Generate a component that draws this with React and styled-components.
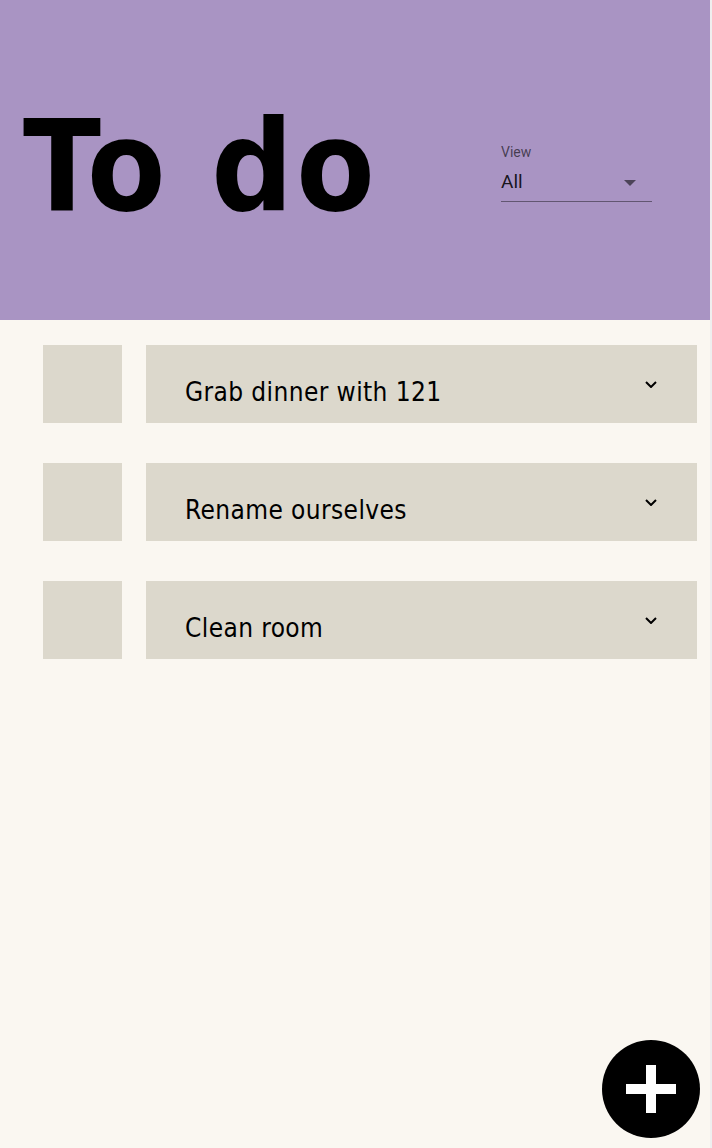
import React from 'react';
import styled, { createGlobalStyle } from 'styled-components';

const todos = ['Grab dinner with 121', 'Rename ourselves', 'Clean room'];

const GlobalStyle = createGlobalStyle`
  html, body {
    margin: 0;
    padding: 0;
    background: #faf7f1;
  }
  * {
    box-sizing: border-box;
  }
`;

const Page = styled.div`
  min-height: 100vh;
  background: #faf7f1;
  border-right: 2px solid #efefef;
`;

const Header = styled.header`
  display: flex;
  align-items: flex-start;
  height: 320px;
  padding: 103px 58px 0 23px;
  background: #a994c3;
`;

const Title = styled.h1`
  margin: 0;
  font-family: "DejaVu Sans Condensed", "DejaVu Sans", sans-serif;
  font-stretch: condensed;
  font-weight: 700;
  font-size: 127px;
  line-height: 1;
  letter-spacing: 3px;
  color: #000;
`;

const ViewSelect = styled.div`
  margin-left: auto;
  margin-top: 42px;
  width: 151px;
  font-family: Roboto, "Liberation Sans", sans-serif;
`;

const SelectLabel = styled.div`
  font-size: 14px;
  line-height: 1;
  color: rgba(0, 0, 0, 0.6);
`;

const SelectValue = styled.div`
  display: flex;
  align-items: center;
  margin-top: 11px;
  height: 32px;
  padding-bottom: 9px;
  font-size: 19px;
  line-height: 23px;
  color: rgba(0, 0, 0, 0.87);
  border-bottom: 1px solid rgba(0, 0, 0, 0.42);
`;

const Arrow = styled.svg`
  margin-left: auto;
  margin-right: 16px;
  margin-top: 3px;
`;

const List = styled.ul`
  list-style: none;
  margin: 0;
  padding: 25px 13px 0 43px;
  display: flex;
  flex-direction: column;
  gap: 40px;
`;

const Row = styled.li`
  display: flex;
  gap: 24px;
  height: 78px;
`;

const Check = styled.div`
  width: 79px;
  flex: none;
  background: #dcd8cc;
`;

const Item = styled.div`
  flex: 1;
  display: flex;
  align-items: center;
  padding-left: 39px;
  background: #dcd8cc;
`;

const ItemText = styled.span`
  padding-top: 16px;
  font-family: "DejaVu Sans Condensed", "DejaVu Sans", sans-serif;
  font-stretch: condensed;
  font-size: 26px;
  line-height: 26px;
  letter-spacing: 0.4px;
  color: #000;
`;

const Chevron = styled.svg`
  margin-left: auto;
  margin-right: 40px;
`;

const Fab = styled.button`
  position: fixed;
  right: 12px;
  bottom: 10px;
  width: 98px;
  height: 98px;
  border: none;
  border-radius: 50%;
  padding: 0;
  background: #000;
  display: flex;
  align-items: center;
  justify-content: center;
  cursor: pointer;
`;

export default function App() {
  return (
    <Page>
      <GlobalStyle />
      <Header>
        <Title>To do</Title>
        <ViewSelect>
          <SelectLabel>View</SelectLabel>
          <SelectValue>
            All
            <Arrow width="12" height="6" viewBox="0 0 12 6">
              <polygon points="0,0 12,0 6,6" fill="rgba(0,0,0,0.54)" />
            </Arrow>
          </SelectValue>
        </ViewSelect>
      </Header>

      <List>
        {todos.map((todo) => (
          <Row key={todo}>
            <Check />
            <Item>
              <ItemText>{todo}</ItemText>
              <Chevron width="12" height="7" viewBox="0 0 12 7">
                <polyline points="1,1 6,6 11,1" fill="none" stroke="#000" strokeWidth="2" />
              </Chevron>
            </Item>
          </Row>
        ))}
      </List>

      <Fab aria-label="Add">
        <svg width="50" height="48" viewBox="0 0 50 48">
          <rect x="0" y="19" width="50" height="10" fill="#fff" />
          <rect x="20" y="0" width="10" height="48" fill="#fff" />
        </svg>
      </Fab>
    </Page>
  );
}
